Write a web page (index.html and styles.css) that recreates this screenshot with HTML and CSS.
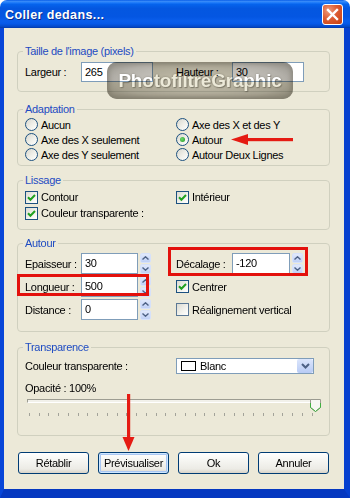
FILE: index.html
```html
<!DOCTYPE html>
<html lang="fr">
<head>
<meta charset="utf-8">
<title>Coller dedans...</title>
<link rel="stylesheet" href="styles.css">
</head>
<body>
<div class="window">
  <div class="titlebar">
    <span class="title">Coller dedans...</span>
    <span class="close"><svg width="19" height="19" viewBox="0 0 19 19"><path d="M5 5 L14 14 M14 5 L5 14" stroke="#fff" stroke-width="2.4" stroke-linecap="square"/></svg></span>
  </div>
  <div class="client">
    <fieldset class="group g-size">
      <legend>Taille de l'image (pixels)</legend>
      <div class="grid2">
        <div class="field"><span class="lbl">Largeur :</span><span class="input w72 h20">265</span></div>
        <div class="field"><span class="lbl">Hauteur :</span><span class="input w72 h20">30</span></div>
      </div>
    </fieldset>

    <fieldset class="group g-adapt">
      <legend>Adaptation</legend>
      <div class="grid2 rows15">
        <div class="opt"><span class="radio"></span>Aucun</div>
        <div class="opt"><span class="radio"></span>Axe des X et des Y</div>
        <div class="opt"><span class="radio"></span>Axe des X seulement</div>
        <div class="opt"><span class="radio on"></span>Autour</div>
        <div class="opt"><span class="radio"></span>Axe des Y seulement</div>
        <div class="opt"><span class="radio"></span>Autour Deux Lignes</div>
      </div>
    </fieldset>

    <fieldset class="group g-liss">
      <legend>Lissage</legend>
      <div class="grid2 rows16">
        <div class="opt"><span class="check"><svg width="11" height="11" viewBox="0 0 11 11"><path d="M2 5.3 L4.4 7.8 L9 3" fill="none" stroke="#21A121" stroke-width="2"/></svg></span>Contour</div>
        <div class="opt"><span class="check"><svg width="11" height="11" viewBox="0 0 11 11"><path d="M2 5.3 L4.4 7.8 L9 3" fill="none" stroke="#21A121" stroke-width="2"/></svg></span>Intérieur</div>
        <div class="opt"><span class="check"><svg width="11" height="11" viewBox="0 0 11 11"><path d="M2 5.3 L4.4 7.8 L9 3" fill="none" stroke="#21A121" stroke-width="2"/></svg></span>Couleur transparente :</div>
      </div>
    </fieldset>

    <fieldset class="group g-autour">
      <legend>Autour</legend>
      <div class="grid2 rows21">
        <div class="field"><span class="lbl">Epaisseur :</span><span class="input w57">30</span><span class="spin"><span class="sb"><svg width="7" height="4" viewBox="0 0 7 4"><path d="M0.5 3.5 L3.5 0.8 L6.5 3.5" fill="none" stroke="#4D6185" stroke-width="1.4"/></svg></span><span class="sb"><svg width="7" height="4" viewBox="0 0 7 4"><path d="M0.5 0.5 L3.5 3.2 L6.5 0.5" fill="none" stroke="#4D6185" stroke-width="1.4"/></svg></span></span></div>
        <div class="field"><span class="lbl">Décalage :</span><span class="input w58">-120</span><span class="spin"><span class="sb"><svg width="7" height="4" viewBox="0 0 7 4"><path d="M0.5 3.5 L3.5 0.8 L6.5 3.5" fill="none" stroke="#4D6185" stroke-width="1.4"/></svg></span><span class="sb"><svg width="7" height="4" viewBox="0 0 7 4"><path d="M0.5 0.5 L3.5 3.2 L6.5 0.5" fill="none" stroke="#4D6185" stroke-width="1.4"/></svg></span></span></div>
        <div class="field"><span class="lbl">Longueur :</span><span class="input w57">500</span><span class="spin"><span class="sb"><svg width="7" height="4" viewBox="0 0 7 4"><path d="M0.5 3.5 L3.5 0.8 L6.5 3.5" fill="none" stroke="#4D6185" stroke-width="1.4"/></svg></span><span class="sb"><svg width="7" height="4" viewBox="0 0 7 4"><path d="M0.5 0.5 L3.5 3.2 L6.5 0.5" fill="none" stroke="#4D6185" stroke-width="1.4"/></svg></span></span></div>
        <div class="opt"><span class="check"><svg width="11" height="11" viewBox="0 0 11 11"><path d="M2 5.3 L4.4 7.8 L9 3" fill="none" stroke="#21A121" stroke-width="2"/></svg></span>Centrer</div>
        <div class="field"><span class="lbl">Distance :</span><span class="input w57">0</span><span class="spin"><span class="sb"><svg width="7" height="4" viewBox="0 0 7 4"><path d="M0.5 3.5 L3.5 0.8 L6.5 3.5" fill="none" stroke="#4D6185" stroke-width="1.4"/></svg></span><span class="sb"><svg width="7" height="4" viewBox="0 0 7 4"><path d="M0.5 0.5 L3.5 3.2 L6.5 0.5" fill="none" stroke="#4D6185" stroke-width="1.4"/></svg></span></span></div>
        <div class="opt"><span class="check off"></span>Réalignement vertical</div>
      </div>
    </fieldset>

    <fieldset class="group g-transp">
      <legend>Transparence</legend>
      <div class="grid2">
        <div class="field">Couleur transparente :</div>
        <div class="select"><span class="swatch"></span><span class="seltxt">Blanc</span><span class="ddbtn"><svg width="9" height="6" viewBox="0 0 9 6"><path d="M1 1 L4.5 4.5 L8 1" fill="none" stroke="#4D6185" stroke-width="2"/></svg></span></div>
      </div>
      <div class="opacity">Opacité : 100%</div>
      <div class="slider">
        <div class="track"></div>
        <svg class="ticks" width="289" height="3" viewBox="0 0 289 3"><path d="M2.5 0v3M12.5 0v3M21.5 0v3M31.5 0v3M41.5 0v3M51.5 0v3M60.5 0v3M70.5 0v3M80.5 0v3M90.5 0v3M99.5 0v3M109.5 0v3M119.5 0v3M129.5 0v3M138.5 0v3M148.5 0v3M158.5 0v3M168.5 0v3M177.5 0v3M187.5 0v3M197.5 0v3M207.5 0v3M216.5 0v3M226.5 0v3M236.5 0v3M246.5 0v3M255.5 0v3M265.5 0v3M275.5 0v3M285.5 0v3" stroke="#A3A39A" stroke-width="1"/></svg>
        <svg class="thumb" width="11" height="13" viewBox="0 0 11 13"><path d="M0.5 0.5 H10.5 V8.5 L5.5 12.5 L0.5 8.5 Z" fill="#F7F7F3" stroke="#9A9A90"/><path d="M10.5 4 V8.5 L5.5 12.5 L0.5 8.5 V4" fill="none" stroke="#3FAF3F" stroke-width="1"/></svg>
      </div>
    </fieldset>

    <div class="buttons">
      <button class="btn">Rétablir</button>
      <button class="btn focus">Prévisualiser</button>
      <button class="btn">Ok</button>
      <button class="btn">Annuler</button>
    </div>
  </div>

  <div class="watermark">PhotofiltreGraphic</div>
  <div class="redbox rb-longueur"></div>
  <div class="redbox rb-decalage"></div>
  <svg class="arrow-left" width="66" height="14" viewBox="0 0 66 14"><path d="M2 6.5 L19 1 L19 12 Z" fill="#E51B13"/><rect x="17" y="5" width="47" height="3.2" fill="#E51B13"/></svg>
  <svg class="arrow-down" width="13" height="58" viewBox="0 0 13 58"><rect x="5" y="0" width="3.2" height="45" fill="#E51B13"/><path d="M0.5 43 L12.5 43 L6.5 57 Z" fill="#E51B13"/></svg>
</div>
</body>
</html>
```

FILE: styles.css
```css
* { box-sizing: border-box; }
html, body { margin: 0; padding: 0; background: #fff; }
body {
  font-family: "Liberation Sans", Arial, sans-serif;
  font-size: 11px;
  letter-spacing: -0.3px;
  color: #000;
}
.window {
  position: relative;
  width: 350px;
  height: 498px;
  display: flex;
  flex-direction: column;
  border-radius: 7px 7px 0 0;
  overflow: hidden;
  isolation: isolate;
}
.titlebar {
  height: 28px;
  flex: none;
  display: flex;
  align-items: center;
  padding-left: 5px;
  background: linear-gradient(to bottom, #0A5FE8 0%, #3A8EFA 6%, #1977F8 10%, #0563EC 16%, #0457E0 30%, #0456E2 60%, #0A5EEC 75%, #0659E8 85%, #0449C8 95%, #0238A8 100%);
}
.title {
  flex: 1;
  color: #fff;
  font-weight: bold;
  font-size: 12.5px;
  letter-spacing: 0.4px;
  text-shadow: 1px 1px 0 #0A2D8C;
  padding-top: 1px;
}
.close {
  width: 21px;
  height: 21px;
  margin-right: 7px;
  border: 1px solid #fff;
  border-radius: 3px;
  background: radial-gradient(circle at 30% 30%, #EE9B7C 0%, #DC5C33 45%, #C8400F 100%);
  display: flex;
  align-items: center;
  justify-content: center;
}
.client {
  flex: 1;
  background: #ECE9D8;
  border-left: 4px solid #0846D8;
  border-right: 6px solid #0640CF;
  border-bottom: 9px solid #0538C0;
  padding: 17px 14px 13px 13px;
  display: flex;
  flex-direction: column;
}
.group {
  margin: 0;
  padding: 0 7px;
  border: 1px solid #D0D0BF;
  border-radius: 4px;
  min-width: 0;
}
legend {
  padding: 0 2px;
  margin-left: -2px;
  color: #1E4BC2;
  line-height: 13px;
}
.g-size { padding-top: 4px; padding-bottom: 9px; }
.g-adapt { margin-top: 11px; padding-top: 1px; padding-bottom: 3px; }
.g-liss { margin-top: 8px; padding-top: 2px; padding-bottom: 8px; }
.g-autour { margin-top: 7px; padding-top: 3px; padding-bottom: 11px; }
.g-transp { margin-top: 9px; padding-top: 4px; padding-bottom: 19px; }

.grid2 { display: grid; grid-template-columns: 151px 1fr; }
.rows15 { grid-auto-rows: 15px; }
.rows16 { grid-auto-rows: 16px; }
.rows21 { grid-auto-rows: 21px; row-gap: 2px; }

.field { display: flex; align-items: center; white-space: nowrap; }
.lbl { width: 56px; flex: none; }
.opt { display: flex; align-items: center; gap: 3px; white-space: nowrap; }

.radio {
  width: 13px;
  height: 13px;
  flex: none;
  border-radius: 50%;
  border: 1px solid #1C5180;
  background: linear-gradient(135deg, #D8D7CE 0%, #F0F0EA 55%, #FFFFFF 100%);
  display: flex;
  align-items: center;
  justify-content: center;
}
.radio.on::after {
  content: "";
  width: 5px;
  height: 5px;
  border-radius: 50%;
  background: radial-gradient(circle at 40% 40%, #6FDB6F, #1E941E);
}
.check {
  width: 13px;
  height: 13px;
  flex: none;
  border: 1px solid #1C5180;
  background: linear-gradient(135deg, #DCDBD2 0%, #F3F3EE 60%, #FFFFFF 100%);
  display: flex;
  align-items: center;
  justify-content: center;
}
.check.off { border-color: #5B7895; }

.input {
  display: block;
  flex: none;
  height: 21px;
  line-height: 19px;
  border: 1px solid #7F9DB9;
  background: #fff;
  padding: 0 3px;
}
.h20 { height: 20px; line-height: 18px; }
.w72 { width: 72px; }
.w57 { width: 57px; }
.w58 { width: 58px; }

.spin {
  width: 11px;
  height: 21px;
  margin-left: 2px;
  display: flex;
  flex-direction: column;
  gap: 1px;
}
.sb {
  flex: 1;
  display: flex;
  align-items: center;
  justify-content: center;
  border-radius: 2px;
  background: linear-gradient(#E1E9FC, #BFD0F6);
  border: 1px solid #D6E1FA;
}

.select {
  width: 138px;
  height: 16px;
  border: 1px solid #7F9DB9;
  background: #fff;
  display: flex;
  align-items: center;
  padding-left: 4px;
}
.swatch {
  width: 15px;
  height: 10px;
  border: 1px solid #000;
  background: #fff;
  margin-right: 4px;
  flex: none;
}
.seltxt { flex: 1; }
.ddbtn {
  width: 16px;
  height: 14px;
  border-radius: 2px;
  background: linear-gradient(#DCE6FC, #B8CBF5);
  display: flex;
  align-items: center;
  justify-content: center;
}
.opacity { margin-top: 8px; line-height: 13px; }
.slider {
  position: relative;
  margin-top: 4px;
  margin-left: 2px;
  width: 289px;
  height: 17px;
}
.track {
  height: 4px;
  border-top: 1px solid #9D9D92;
  border-left: 1px solid #9D9D92;
  border-bottom: 1px solid #fff;
  border-right: 1px solid #fff;
  background: #F2F1EA;
}
.ticks { display: block; margin-top: 10px; }
.thumb { position: absolute; left: 283px; top: 0; }

.buttons {
  display: flex;
  gap: 9px;
  margin-top: 16px;
  margin-left: 1px;
}
.btn {
  width: 71px;
  height: 22px;
  padding: 0;
  border: 1px solid #003C74;
  border-radius: 3px;
  background: linear-gradient(#FFFFFF 0%, #F5F5F1 40%, #ECEBE5 80%, #D8D3C8 100%);
  font: inherit;
  letter-spacing: inherit;
  color: #000;
  display: flex;
  align-items: center;
  justify-content: center;
}
.btn.focus { box-shadow: inset 0 0 0 1px #CEE7FF, inset 0 0 0 2px #A9C6F2; }

.watermark {
  position: absolute;
  left: 107px;
  top: 62px;
  width: 186px;
  height: 37px;
  border-radius: 10px;
  mix-blend-mode: multiply;
  background: radial-gradient(ellipse 60% 70% at center, #C9C6C0 30%, #B4B1AA 75%, #99968E 100%);
  box-shadow: inset 0 0 4px 2px #8E8B83;
  display: flex;
  align-items: center;
  justify-content: center;
  padding-top: 1px;
  font-weight: bold;
  font-size: 19px;
  letter-spacing: -0.2px;
  color: #FFFFFF;
  text-shadow: 0 0 2px #8A877E, 1px 1px 1px #8A877E;
}
.redbox {
  position: absolute;
  border: 3px solid #E3110C;
}
.rb-longueur { left: 17px; top: 274px; width: 132px; height: 22px; }
.rb-decalage { left: 168px; top: 247px; width: 140px; height: 29px; }
.arrow-left { position: absolute; left: 229px; top: 133px; }
.arrow-down { position: absolute; left: 122px; top: 394px; }
```
